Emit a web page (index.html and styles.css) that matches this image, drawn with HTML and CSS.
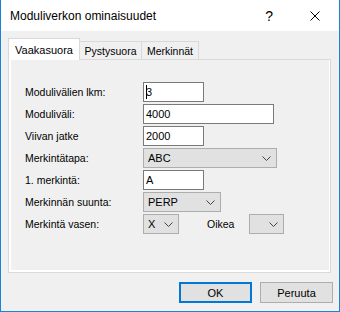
FILE: index.html
```html
<!DOCTYPE html>
<html lang="fi">
<head>
    <meta charset="UTF-8">
    <title>Moduliverkon ominaisuudet</title>
    <link rel="stylesheet" href="styles.css">
</head>
<body>
<div class="window">
    <div class="titlebar">
        <span class="title">Moduliverkon ominaisuudet</span>
        <span class="help">?</span>
        <svg class="close" width="10" height="10" viewBox="0 0 10 10">
            <path d="M0.5 0.5 L9.5 9.5 M9.5 0.5 L0.5 9.5" stroke="#000" stroke-width="1" fill="none"/>
        </svg>
    </div>

    <div class="tabs">
        <div class="tab active">Vaakasuora</div>
        <div class="tab tab-pys">Pystysuora</div>
        <div class="tab tab-mer">Merkinnät</div>
    </div>

    <div class="panel">
        <div class="page">
            <div class="form">
                <span class="label">Modulivälien lkm:</span>
                <div class="field w61"><span class="caret"></span>3</div>

                <span class="label">Moduliväli:</span>
                <div class="field w131">4000</div>

                <span class="label">Viivan jatke</span>
                <div class="field w61">2000</div>

                <span class="label">Merkintätapa:</span>
                <div class="combo w134"><span>ABC</span><svg width="9" height="5" viewBox="0 0 9 5"><polyline points="0.5,0.5 4.5,4.5 8.5,0.5" stroke="#444" fill="none"/></svg></div>

                <span class="label">1. merkintä:</span>
                <div class="field w61">A</div>

                <span class="label">Merkinnän suunta:</span>
                <div class="combo w78"><span>PERP</span><svg width="9" height="5" viewBox="0 0 9 5"><polyline points="0.5,0.5 4.5,4.5 8.5,0.5" stroke="#444" fill="none"/></svg></div>

                <span class="label">Merkintä vasen:</span>
                <div class="last-row">
                    <div class="combo w36"><span>X</span><svg width="9" height="5" viewBox="0 0 9 5"><polyline points="0.5,0.5 4.5,4.5 8.5,0.5" stroke="#444" fill="none"/></svg></div>
                    <span class="label oikea">Oikea</span>
                    <div class="combo w35"><span></span><svg width="9" height="5" viewBox="0 0 9 5"><polyline points="0.5,0.5 4.5,4.5 8.5,0.5" stroke="#444" fill="none"/></svg></div>
                </div>
            </div>
        </div>
    </div>

    <div class="buttons">
        <div class="button default">OK</div>
        <div class="button">Peruuta</div>
    </div>
</div>
</body>
</html>
```

FILE: styles.css
```css
body {
    margin: 0;
    font-family: 'Liberation Sans', Arial, sans-serif;
    font-size: 10.5px;
    color: #000;
    background: #f0f0f0;
}

.window {
    width: 340px;
    height: 312px;
    box-sizing: border-box;
    border: 1px solid #1883d7;
    border-top: none;
    background: #f0f0f0;
}

.titlebar {
    height: 31px;
    background: #fff;
    display: flex;
    align-items: center;
    padding-left: 9px;
}

.title {
    font-size: 12px;
    flex: 1;
}

.help {
    font-size: 14px;
    margin-right: 37px;
}

.close {
    margin-right: 19px;
}

/* tab strip */
.tabs {
    display: flex;
    align-items: flex-end;
    margin: 7px 0 0 7px;
}

.tab {
    box-sizing: border-box;
    height: 18px;
    border: 1px solid #d9d9d9;
    border-bottom: none;
    display: flex;
    align-items: center;
    justify-content: center;
    padding-top: 1px;
}

.tab.active {
    width: 72px;
    height: 22px;
    background: #fff;
    margin-bottom: -1px;
    position: relative;
    z-index: 1;
    font-size: 11px;
    padding-top: 0;
}

.tab-pys {
    width: 62px;
    border-left: none;
}

.tab-mer {
    width: 57px;
    border-left: none;
}

.panel {
    box-sizing: border-box;
    width: 323px;
    height: 214px;
    margin-left: 7px;
    border: 1px solid #d9d9d9;
    background: #fff;
    padding: 0 1px 2px 2px;
}

.page {
    height: 100%;
    background: #f0f0f0;
}

.form {
    display: grid;
    grid-template-columns: 118px auto;
    grid-auto-rows: 20px;
    row-gap: 2px;
    padding: 22px 0 0 14px;
}

.label {
    align-self: center;
}

.field {
    box-sizing: border-box;
    justify-self: start;
    height: 20px;
    border: 1px solid #7a7a7a;
    background: #fff;
    padding-left: 2px;
    line-height: 18px;
    font-size: 11px;
}

.caret {
    display: inline-block;
    width: 1px;
    height: 14px;
    background: #000;
    vertical-align: -3px;
    margin-right: -1px;
}

.combo {
    box-sizing: border-box;
    justify-self: start;
    height: 20px;
    border: 1px solid #adadad;
    background: #e1e1e1;
    display: flex;
    align-items: center;
    justify-content: space-between;
    padding: 0 5px 0 4px;
    font-size: 11px;
}

.w61 { width: 61px; }
.w131 { width: 131px; }
.w134 { width: 134px; }
.w78 { width: 78px; }
.w36 { width: 36px; }
.w35 { width: 35px; }

.last-row {
    display: flex;
    align-items: center;
}

.oikea {
    margin-left: 28px;
    width: 42px;
}

.buttons {
    display: flex;
    justify-content: flex-end;
    gap: 8px;
    margin-top: 9px;
    padding-right: 6px;
}

.button {
    box-sizing: border-box;
    width: 73px;
    height: 21px;
    border: 1px solid #adadad;
    background: #e1e1e1;
    display: flex;
    align-items: center;
    justify-content: center;
    font-size: 11px;
}

.button.default {
    border: 2px solid #0078d7;
}
```
